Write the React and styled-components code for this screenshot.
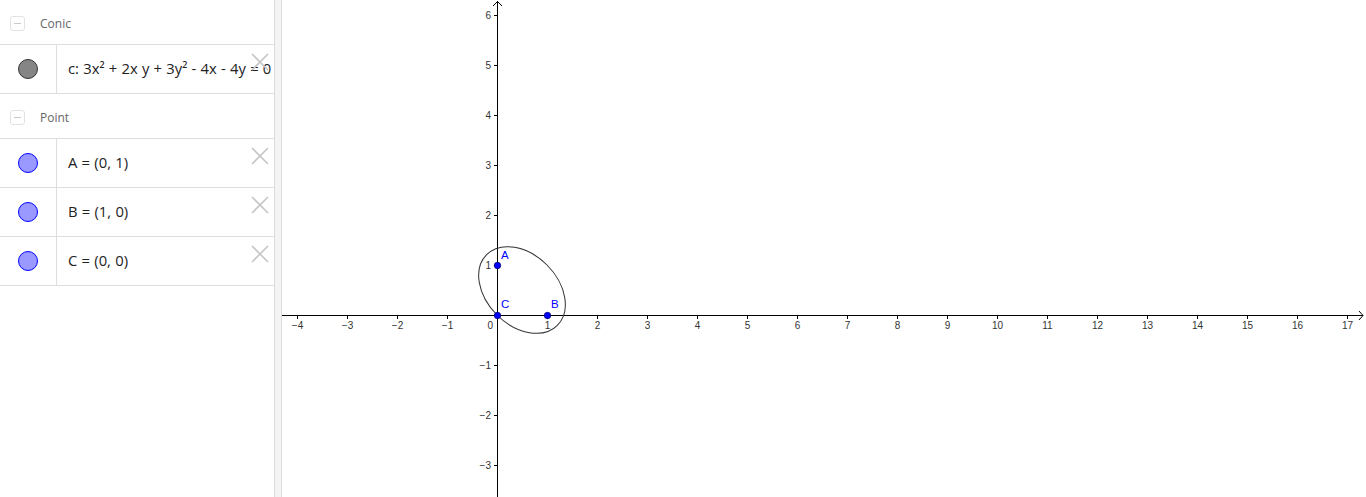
import React from "react";
import styled, { createGlobalStyle } from "styled-components";

const Global = createGlobalStyle`
  html, body { margin: 0; padding: 0; background: #fff; }
  body { font-family: "Open Sans", "Liberation Sans", sans-serif; overflow: hidden; }
`;

const Page = styled.div`
  display: flex;
  width: 1366px;
  height: 497px;
  background: #fff;
`;

const AlgebraPanel = styled.div`
  width: 274px;
  flex: none;
  border-right: 1px solid #dcdcdc;
  display: flex;
  flex-direction: column;
`;

const Splitter = styled.div`
  width: 6px;
  flex: none;
  background: #f4f4f4;
  border-right: 1px solid #dcdcdc;
`;

const Canvas = styled.div`
  flex: 1;
  position: relative;
  overflow: hidden;
`;

const GroupHeader = styled.div`
  height: ${p => p.$h}px;
  display: flex;
  align-items: center;
  border-bottom: 1px solid #dedede;
  box-sizing: border-box;
  padding-left: 10px;
  padding-top: 2px;
  gap: 15px;
  font-size: 12px;
  color: #666;
`;

const Collapse = styled.span`
  width: 13px;
  height: 13px;
  border: 1px solid #e2e2e2;
  border-radius: 3px;
  display: flex;
  align-items: center;
  justify-content: center;
  &::after {
    content: "";
    width: 7px;
    height: 1px;
    background: #c8c8c8;
  }
`;

const Row = styled.div`
  height: 49px;
  display: flex;
  border-bottom: 1px solid #dedede;
  box-sizing: border-box;
  position: relative;
`;

const MarkerCell = styled.div`
  width: 56px;
  flex: none;
  border-right: 1px solid #dedede;
  display: flex;
  align-items: center;
  justify-content: center;
`;

const Marker = styled.span`
  width: 18px;
  height: 18px;
  border-radius: 50%;
  background: ${p => p.$fill};
  border: 1px solid ${p => p.$stroke};
`;

const Formula = styled.div`
  display: flex;
  align-items: center;
  padding-left: 11px;
  padding-bottom: 2px;
  font-size: 14.8px;
  color: #222;
  white-space: nowrap;
  word-spacing: 0.4px;
`;

const Close = styled.span`
  position: absolute;
  top: 8px;
  right: 5px;
  width: 18px;
  height: 18px;
`;

const CloseIcon = () => (
  <Close>
    <svg width="18" height="18" viewBox="0 0 18 18">
      <path d="M1 1 L17 17 M17 1 L1 17" stroke="#c6c6c6" strokeWidth="1.6" fill="none" />
    </svg>
  </Close>
);

const ox = 215;
const oy = 315;
const u = 50;

const Graph = () => {
  const xs = [];
  for (let k = -4; k <= 17; k++) xs.push(k);
  const ys = [-3, -2, -1, 1, 2, 3, 4, 5, 6];
  const fmt = k => (k < 0 ? "\u2212" + Math.abs(k) : String(k));
  return (
    <svg width="1084" height="497" style={{ display: "block" }}>
      <g fontFamily="Liberation Sans, Arial, sans-serif" fontSize="10" fill="#333">
        {xs.map(k =>
          k === 0 ? null : (
            <g key={"x" + k}>
              <line x1={ox + k * u + 0.5} y1={oy} x2={ox + k * u + 0.5} y2={oy + 4} stroke="#000" />
              <text x={ox + k * u + 0.5} y={oy + 14} textAnchor="middle">{fmt(k)}</text>
            </g>
          )
        )}
        <text x={ox - 4} y={oy + 14} textAnchor="end">0</text>
        {ys.map(k => (
          <g key={"y" + k}>
            <line x1={ox - 3} y1={oy - k * u + 0.5} x2={ox} y2={oy - k * u + 0.5} stroke="#000" />
            <text x={ox - 6} y={oy - k * u + 4} textAnchor="end">{fmt(k)}</text>
          </g>
        ))}
      </g>
      <line x1="0" y1={oy + 0.5} x2="1081" y2={oy + 0.5} stroke="#000" />
      <path d={`M1077 ${oy - 4} L1081 ${oy + 0.5} L1077 ${oy + 5}`} stroke="#000" fill="none" />
      <line x1={ox + 0.5} y1="1" x2={ox + 0.5} y2="497" stroke="#000" />
      <path d={`M${ox - 4} 6 L${ox + 0.5} 1.5 L${ox + 5} 6`} stroke="#000" fill="none" />
      <ellipse
        cx={ox + 25}
        cy={oy - 25}
        rx={50}
        ry={35.36}
        transform={`rotate(45 ${ox + 25} ${oy - 25})`}
        fill="none"
        stroke="#333"
        strokeWidth="1"
      />
      <g fill="#0000ff" stroke="#00006a" strokeWidth="0.8">
        <circle cx={ox + 0.5} cy={oy - 50 + 0.5} r="3.2" />
        <circle cx={ox + 50 + 0.5} cy={oy + 0.5} r="3.2" />
        <circle cx={ox + 0.5} cy={oy + 0.5} r="3.2" />
      </g>
      <g fontFamily="Liberation Sans, Arial, sans-serif" fontSize="11.5" fill="#0000ff">
        <text x={ox + 4} y={oy - 56}>A</text>
        <text x={ox + 54} y={oy - 7}>B</text>
        <text x={ox + 4} y={oy - 7}>C</text>
      </g>
    </svg>
  );
};

export default function App() {
  return (
    <Page>
      <Global />
      <AlgebraPanel>
        <GroupHeader $h={45}>
          <Collapse />
          <span>Conic</span>
        </GroupHeader>
        <Row>
          <MarkerCell>
            <Marker $fill="#858585" $stroke="#333" />
          </MarkerCell>
          <Formula>c: 3x² + 2x y + 3y² - 4x - 4y = 0</Formula>
          <CloseIcon />
        </Row>
        <GroupHeader $h={45}>
          <Collapse />
          <span>Point</span>
        </GroupHeader>
        <Row>
          <MarkerCell>
            <Marker $fill="#9999ff" $stroke="#0000ff" />
          </MarkerCell>
          <Formula>A = (0, 1)</Formula>
          <CloseIcon />
        </Row>
        <Row>
          <MarkerCell>
            <Marker $fill="#9999ff" $stroke="#0000ff" />
          </MarkerCell>
          <Formula>B = (1, 0)</Formula>
          <CloseIcon />
        </Row>
        <Row>
          <MarkerCell>
            <Marker $fill="#9999ff" $stroke="#0000ff" />
          </MarkerCell>
          <Formula>C = (0, 0)</Formula>
          <CloseIcon />
        </Row>
      </AlgebraPanel>
      <Splitter />
      <Canvas>
        <Graph />
      </Canvas>
    </Page>
  );
}
